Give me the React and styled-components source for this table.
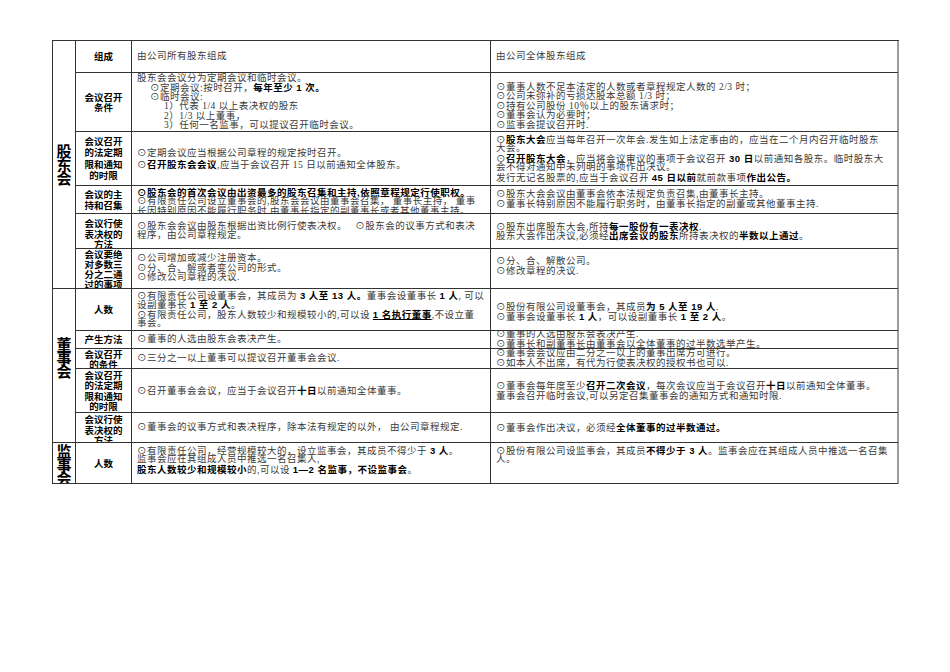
import React from "react";
import styled, { createGlobalStyle } from "styled-components";

const GlobalStyle = createGlobalStyle`
  body {
    margin: 0;
    background: #fff;
  }
`;

const Page = styled.div`
  width: 950px;
  height: 672px;
  box-sizing: border-box;
  padding: 40px 0 0 52px;
`;

const Sheet = styled.div`
  display: grid;
  box-sizing: border-box;
  width: 847px;
  grid-template-columns: 23px 56px 359px 408px;
  grid-template-rows: 32px 59px 54px 28px 35px 40px 42px 18px 20px 44px 30px 41px;
  border-top: 1px solid #333;
  border-left: 1px solid #333;
`;

const Cell = styled.div`
  box-sizing: border-box;
  display: flex;
  flex-direction: column;
  justify-content: ${(p) => p.$align || "center"};
  padding-top: ${(p) => p.$pt || 0}px;
  padding-bottom: ${(p) => p.$pb || 0}px;
  border-right: 1px solid #333;
  border-bottom: 1px solid #333;
  overflow: hidden;
`;

const Group = styled(Cell)`
  grid-row: span ${(p) => p.$span};
  align-items: center;
  text-align: center;
  font-family: "Noto Sans CJK SC", sans-serif;
  font-weight: 700;
  font-size: 15px;
  line-height: 13.5px;
  color: #000;
`;

const Label = styled(Cell)`
  align-items: center;
  text-align: center;
  font-family: "Noto Sans CJK SC", sans-serif;
  font-weight: 700;
  font-size: 9.5px;
  line-height: ${(p) => p.$lh || 10.5}px;
  color: #000;
  white-space: nowrap;
`;

const Content = styled(Cell)`
  --lh: ${(p) => p.$lh || 9.4}px;
  padding-left: 5px;
  padding-right: 4px;
  font-family: "Liberation Serif", "Noto Sans CJK SC", serif;
  font-size: 9.5px;
  letter-spacing: 0.5px;
  line-height: var(--lh);
  color: #3a3a3a;
  white-space: nowrap;
  border-right: ${(p) => (p.$last ? "2px solid #9c9c9c" : "1px solid #333")};
`;

const Line = styled.div`
  flex: none;
  height: var(--lh);
  padding-left: ${(p) => p.$indent || 0}px;
`;

const B = styled.span`
  font-family: "Liberation Sans", "Noto Sans CJK SC", sans-serif;
  font-weight: 700;
  color: #000;
  text-decoration: ${(p) => (p.$u ? "underline" : "none")};
`;

export default function App() {
  return (
    <Page>
      <GlobalStyle />
      <Sheet>
        <Group $span={6}>股东会</Group>

        <Label>组成</Label>
        <Content>
          <Line>由公司所有股东组成</Line>
        </Content>
        <Content $last>
          <Line>由公司全体股东组成</Line>
        </Content>

        <Label>会议召开<br />条件</Label>
        <Content $align="flex-start" $pt={1}>
          <Line>股东会会议分为定期会议和临时会议。</Line>
          <Line $indent={13}>⊙定期会议:按时召开，<B>每年至少 1 次。</B></Line>
          <Line $indent={13}>⊙临时会议:</Line>
          <Line $indent={27}>1）代表 1/4 以上表决权的股东</Line>
          <Line $indent={27}>2）1/3 以上董事，</Line>
          <Line $indent={27}>3）任何一名监事，可以提议召开临时会议。</Line>
        </Content>
        <Content $last $align="flex-end" $pb={1}>
          <Line>⊙董事人数不足本法定的人数或者章程规定人数的 2/3 时；</Line>
          <Line>⊙公司未弥补的亏损达股本总额 1/3 时；</Line>
          <Line>⊙持有公司股份 10％以上的股东请求时；</Line>
          <Line>⊙董事会认为必要时；</Line>
          <Line>⊙监事会提议召开时.</Line>
        </Content>

        <Label $lh={11.5}>会议召开<br />的法定期<br />限和通知<br />的时限</Label>
        <Content $lh={11}>
          <Line>⊙定期会议应当根据公司章程的规定按时召开。</Line>
          <Line>⊙<B>召开股东会会议</B>,应当于会议召开 15 日以前通知全体股东。</Line>
        </Content>
        <Content $last>
          <Line>⊙<B>股东大会</B>应当每年召开一次年会.发生如上法定事由的，应当在二个月内召开临时股东</Line>
          <Line>大会。</Line>
          <Line>⊙<B>召开股东大会</B>，应当将会议审议的事项于会议召开 <B>30 日</B>以前通知各股东。临时股东大</Line>
          <Line>会不得对通知中未列明的事项作出决议。</Line>
          <Line>发行无记名股票的,应当于会议召开 <B>45 日以前</B>就前款事项<B>作出公告。</B></Line>
        </Content>

        <Label>会议的主<br />持和召集</Label>
        <Content $align="flex-start" $pt={2}>
          <Line><B>⊙股东会的首次会议由出资最多的股东召集和主持,依照章程规定行使职权。</B></Line>
          <Line>⊙有限责任公司设立董事会的,股东会会议由董事会召集， 董事长主持， 董事</Line>
          <Line>长因特别原因不能履行职务时,由董事长指定的副董事长或者其他董事主持。</Line>
        </Content>
        <Content $last>
          <Line>⊙股东大会会议由董事会依本法规定负责召集,由董事长主持。</Line>
          <Line>⊙董事长特别原因不能履行职务时，由董事长指定的副董或其他董事主持.</Line>
        </Content>

        <Label $pt={6}>会议行使<br />表决权的<br />方法</Label>
        <Content>
          <Line>⊙股东会会议由股东根据出资比例行使表决权。　 ⊙股东会的议事方式和表决</Line>
          <Line>程序，由公司章程规定。</Line>
        </Content>
        <Content $last>
          <Line>⊙股东出席股东大会,所持<B>每一股份有一表决权</B>.</Line>
          <Line>股东大会作出决议,必须经<B>出席会议的股东</B>所持表决权的<B>半数以上通过</B>。</Line>
        </Content>

        <Label $lh={10}>会议要绝<br />对多数三<br />分之二通<br />过的事项</Label>
        <Content>
          <Line>⊙公司增加或减少注册资本。</Line>
          <Line>⊙分、合、解或者变公司的形式。</Line>
          <Line>⊙修改公司章程的决议.</Line>
        </Content>
        <Content $last $pb={4}>
          <Line>⊙分、合、解散公司。</Line>
          <Line>⊙修改章程的决议.</Line>
        </Content>

        <Group $span={5} $pb={16}>董事会</Group>

        <Label>人数</Label>
        <Content>
          <Line>⊙有限责任公司设董事会，其成员为 <B>3 人至 13 人。</B>董事会设董事长 <B>1 人</B>, 可以</Line>
          <Line>设副董事长 <B>1 至 2 人</B>。</Line>
          <Line>⊙有限责任公司，股东人数较少和规模较小的,可以设 <B $u>1 名执行董事</B>,不设立董</Line>
          <Line>事会。</Line>
        </Content>
        <Content $last $pt={4}>
          <Line>⊙股份有限公司设董事会，其成员<B>为 5 人至 19 人</B>.</Line>
          <Line>⊙董事会设董事长 <B>1 人</B>，可以设副董事长 <B>1 至 2 人</B>。</Line>
        </Content>

        <Label>产生方法</Label>
        <Content>
          <Line>⊙董事的人选由股东会表决产生。</Line>
        </Content>
        <Content $last>
          <Line>⊙董事的人选由股东会表决产生.</Line>
          <Line>⊙董事长和副董事长由董事会以全体董事的过半数选举产生。</Line>
        </Content>

        <Label $lh={10}>会议召开<br />的条件</Label>
        <Content>
          <Line>⊙三分之一以上董事可以提议召开董事会会议.</Line>
        </Content>
        <Content $last>
          <Line>⊙董事会会议应由二分之一以上的董事出席方可进行。</Line>
          <Line>⊙如本人不出席，有代为行使表决权的授权书也可以.</Line>
        </Content>

        <Label $lh={10.3}>会议召开<br />的法定期<br />限和通知<br />的时限</Label>
        <Content>
          <Line>⊙召开董事会会议，应当于会议召开<B>十日</B>以前通知全体董事。</Line>
        </Content>
        <Content $last $lh={10}>
          <Line>⊙董事会每年度至少<B>召开二次会议</B>，每次会议应当于会议召开<B>十日</B>以前通知全体董事。</Line>
          <Line>董事会召开临时会议,可以另定召集董事会的通知方式和通知时限.</Line>
        </Content>

        <Label $pt={5}>会议行使<br />表决权的<br />方法</Label>
        <Content>
          <Line>⊙董事会的议事方式和表决程序，除本法有规定的以外， 由公司章程规定.</Line>
        </Content>
        <Content $last>
          <Line>⊙董事会作出决议，必须经<B>全体董事的过半数通过。</B></Line>
        </Content>

        <Group $span={1} $align="flex-start" $pt={1}>监事会</Group>

        <Label>人数</Label>
        <Content $pb={6}>
          <Line>⊙有限责任公司，经营规模较大的，设立监事会，其成员不得少于 <B>3 人</B>。</Line>
          <Line>监事会应在其组成人员中推选一名召集人,</Line>
          <Line><B>股东人数较少和规模较小</B>的,可以设 <B>1—2 名监事，不设监事会</B>。</Line>
        </Content>
        <Content $last $pb={16}>
          <Line>⊙股份有限公司设监事会，其成员<B>不得少于 3 人</B>。监事会应在其组成人员中推选一名召集</Line>
          <Line>人。</Line>
        </Content>
      </Sheet>
    </Page>
  );
}
